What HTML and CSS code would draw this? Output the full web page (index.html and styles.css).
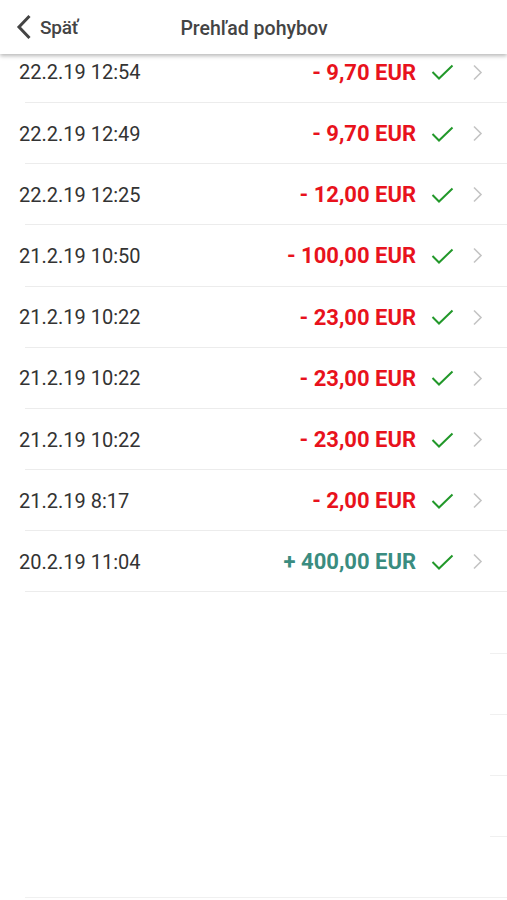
FILE: index.html
```html
<!DOCTYPE html>
<html lang="sk">
<head>
<meta charset="utf-8">
<title>Prehľad pohybov</title>
<link rel="stylesheet" href="styles.css">
</head>
<body>
<div class="screen">
  <header class="topbar">
    <div class="back">
      <svg class="back-icon" width="16" height="26" viewBox="0 0 16 26"><path d="M13.5 2 L3 13 L13.5 24" fill="none" stroke="#444" stroke-width="3"/></svg>
      <span class="back-label">Späť</span>
    </div>
    <div class="title">Prehľad pohybov</div>
  </header>
  <ul class="list">
    <li class="row"><span class="date">22.2.19 12:54</span><span class="amount neg">- 9,70 EUR</span><svg class="check" width="23" height="16" viewBox="0 0 23 16"><path d="M1.5 8 L8 14.5 L21.5 1.5" fill="none" stroke="#22982a" stroke-width="2"/></svg><svg class="chev" width="11" height="17" viewBox="0 0 11 17"><path d="M2 1.5 L9 8.5 L2 15.5" fill="none" stroke="#c4c4c4" stroke-width="1.6"/></svg></li>
    <li class="row"><span class="date">22.2.19 12:49</span><span class="amount neg">- 9,70 EUR</span><svg class="check" width="23" height="16" viewBox="0 0 23 16"><path d="M1.5 8 L8 14.5 L21.5 1.5" fill="none" stroke="#22982a" stroke-width="2"/></svg><svg class="chev" width="11" height="17" viewBox="0 0 11 17"><path d="M2 1.5 L9 8.5 L2 15.5" fill="none" stroke="#c4c4c4" stroke-width="1.6"/></svg></li>
    <li class="row"><span class="date">22.2.19 12:25</span><span class="amount neg">- 12,00 EUR</span><svg class="check" width="23" height="16" viewBox="0 0 23 16"><path d="M1.5 8 L8 14.5 L21.5 1.5" fill="none" stroke="#22982a" stroke-width="2"/></svg><svg class="chev" width="11" height="17" viewBox="0 0 11 17"><path d="M2 1.5 L9 8.5 L2 15.5" fill="none" stroke="#c4c4c4" stroke-width="1.6"/></svg></li>
    <li class="row"><span class="date">21.2.19 10:50</span><span class="amount neg">- 100,00 EUR</span><svg class="check" width="23" height="16" viewBox="0 0 23 16"><path d="M1.5 8 L8 14.5 L21.5 1.5" fill="none" stroke="#22982a" stroke-width="2"/></svg><svg class="chev" width="11" height="17" viewBox="0 0 11 17"><path d="M2 1.5 L9 8.5 L2 15.5" fill="none" stroke="#c4c4c4" stroke-width="1.6"/></svg></li>
    <li class="row"><span class="date">21.2.19 10:22</span><span class="amount neg">- 23,00 EUR</span><svg class="check" width="23" height="16" viewBox="0 0 23 16"><path d="M1.5 8 L8 14.5 L21.5 1.5" fill="none" stroke="#22982a" stroke-width="2"/></svg><svg class="chev" width="11" height="17" viewBox="0 0 11 17"><path d="M2 1.5 L9 8.5 L2 15.5" fill="none" stroke="#c4c4c4" stroke-width="1.6"/></svg></li>
    <li class="row"><span class="date">21.2.19 10:22</span><span class="amount neg">- 23,00 EUR</span><svg class="check" width="23" height="16" viewBox="0 0 23 16"><path d="M1.5 8 L8 14.5 L21.5 1.5" fill="none" stroke="#22982a" stroke-width="2"/></svg><svg class="chev" width="11" height="17" viewBox="0 0 11 17"><path d="M2 1.5 L9 8.5 L2 15.5" fill="none" stroke="#c4c4c4" stroke-width="1.6"/></svg></li>
    <li class="row"><span class="date">21.2.19 10:22</span><span class="amount neg">- 23,00 EUR</span><svg class="check" width="23" height="16" viewBox="0 0 23 16"><path d="M1.5 8 L8 14.5 L21.5 1.5" fill="none" stroke="#22982a" stroke-width="2"/></svg><svg class="chev" width="11" height="17" viewBox="0 0 11 17"><path d="M2 1.5 L9 8.5 L2 15.5" fill="none" stroke="#c4c4c4" stroke-width="1.6"/></svg></li>
    <li class="row"><span class="date">21.2.19 8:17</span><span class="amount neg">- 2,00 EUR</span><svg class="check" width="23" height="16" viewBox="0 0 23 16"><path d="M1.5 8 L8 14.5 L21.5 1.5" fill="none" stroke="#22982a" stroke-width="2"/></svg><svg class="chev" width="11" height="17" viewBox="0 0 11 17"><path d="M2 1.5 L9 8.5 L2 15.5" fill="none" stroke="#c4c4c4" stroke-width="1.6"/></svg></li>
    <li class="row"><span class="date">20.2.19 11:04</span><span class="amount pos">+ 400,00 EUR</span><svg class="check" width="23" height="16" viewBox="0 0 23 16"><path d="M1.5 8 L8 14.5 L21.5 1.5" fill="none" stroke="#22982a" stroke-width="2"/></svg><svg class="chev" width="11" height="17" viewBox="0 0 11 17"><path d="M2 1.5 L9 8.5 L2 15.5" fill="none" stroke="#c4c4c4" stroke-width="1.6"/></svg></li>
    <li class="empty"></li>
    <li class="empty"></li>
    <li class="empty"></li>
    <li class="empty"></li>
    <li class="empty last"></li>
  </ul>
</div>
</body>
</html>
```
FILE: styles.css
```css
* { box-sizing: border-box; }
html, body {
  margin: 0;
  padding: 0;
  background: #fff;
}
body {
  font-family: Roboto, "Liberation Sans", Arial, sans-serif;
  width: 507px;
  height: 900px;
  overflow: hidden;
}
.screen {
  position: relative;
  width: 507px;
  height: 900px;
  overflow: hidden;
}
.topbar {
  position: absolute;
  top: 0;
  left: 0;
  right: 0;
  height: 54px;
  background: #fff;
  box-shadow: 0 2px 4px rgba(0,0,0,0.28);
  z-index: 2;
  display: flex;
  align-items: center;
  justify-content: center;
}
.back {
  position: absolute;
  left: 16px;
  top: 14px;
  display: flex;
  align-items: center;
  gap: 8px;
}
.back-icon { display: block; }
.back-label {
  font-size: 19px;
  font-weight: 500;
  color: #444;
  letter-spacing: -0.2px;
}
.title {
  font-size: 19.5px;
  font-weight: 500;
  color: #444;
  margin-left: 1px;
  margin-top: 2px;
}
.list {
  list-style: none;
  margin: 0;
  padding: 41.8px 0 0 0;
}
.row {
  height: 61.2px;
  display: flex;
  align-items: center;
  padding: 0 24px 0 19px;
  position: relative;
}
.row::after, .empty::after {
  content: "";
  position: absolute;
  left: 25px;
  right: 0;
  bottom: 0;
  height: 1px;
  background: #ececec;
}
.empty {
  height: 61.2px;
  position: relative;
}
.empty::after {
  left: 490px;
  background: #f0f0f0;
}
.empty.last::after {
  left: 25px;
}
.date {
  font-size: 20px;
  color: #333;
  flex: 1;
}
.amount {
  font-size: 22px;
  font-weight: 700;
}
.neg { color: #e8121c; }
.pos { color: #3a8c80; }
.check {
  display: block;
  margin-left: 15px;
}
.chev {
  display: block;
  margin-left: 18px;
}
```
